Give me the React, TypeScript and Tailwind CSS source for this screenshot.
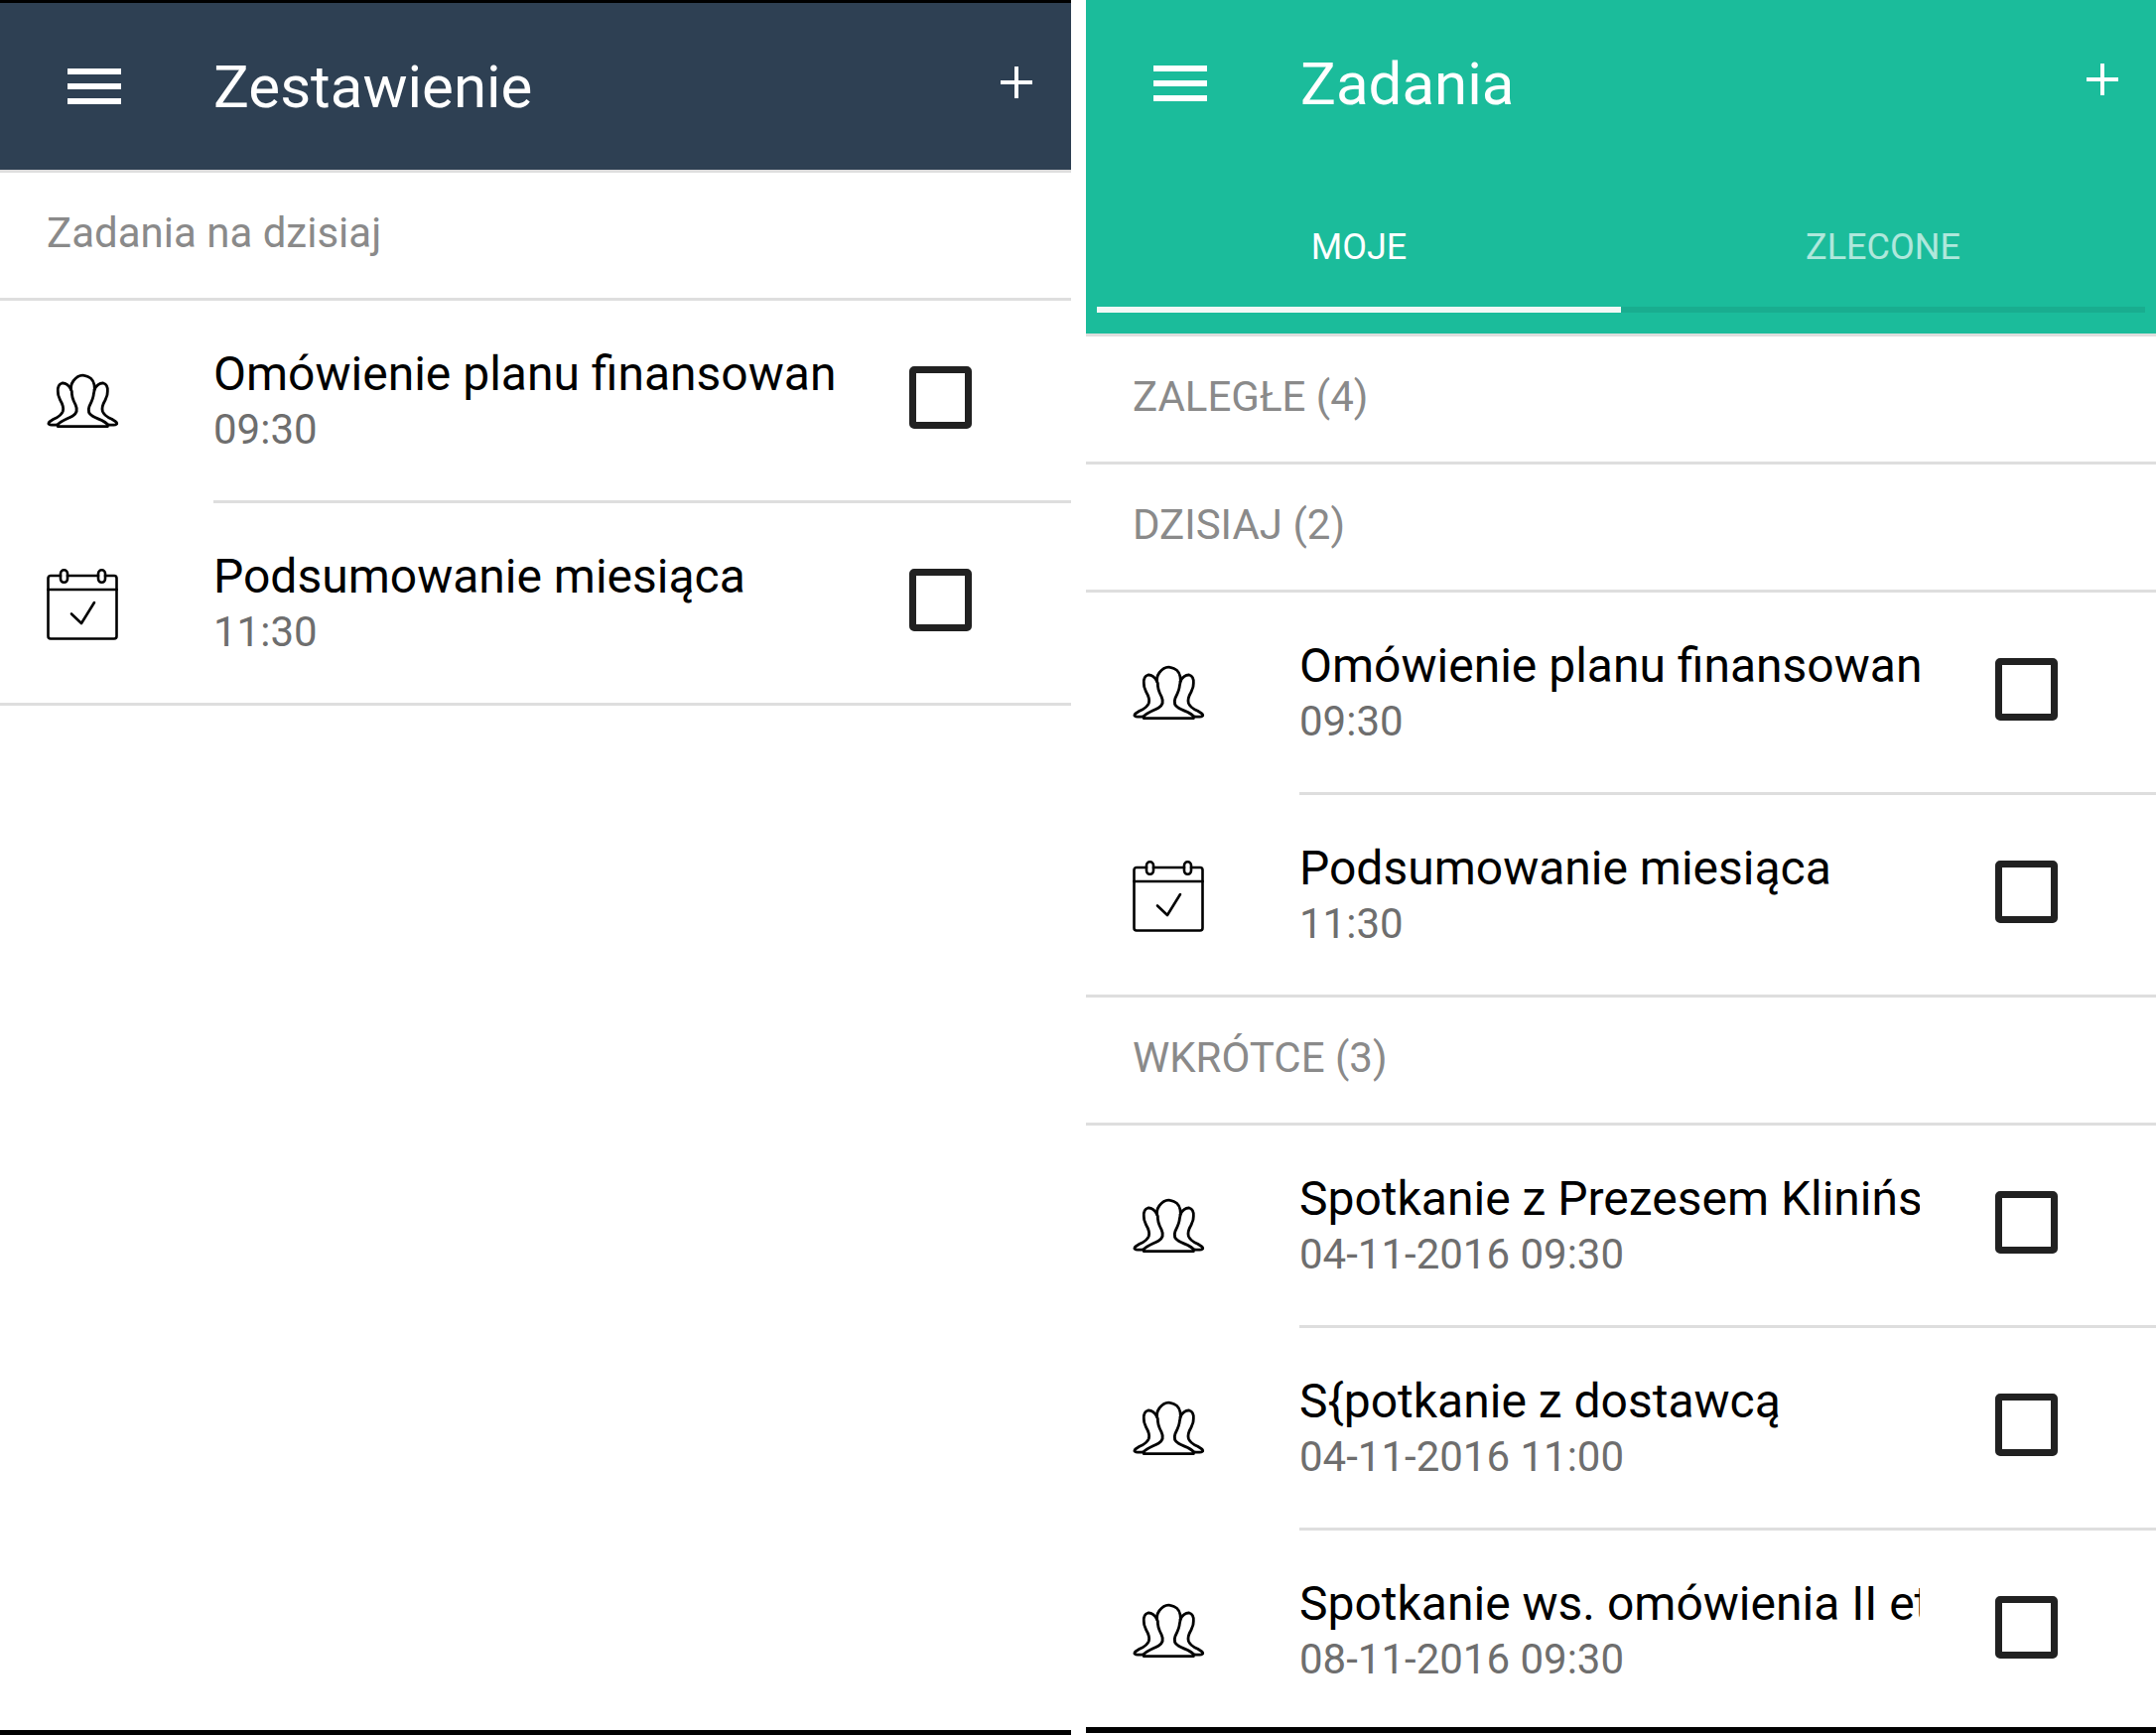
const font = "font-['Roboto',sans-serif]";

function Hamburger() {
  return (
    <div className="flex w-[54px] flex-col gap-[9px]">
      <div className="h-[6px] bg-white" />
      <div className="h-[6px] bg-white" />
      <div className="h-[6px] bg-white" />
    </div>
  );
}

function Plus() {
  return (
    <svg width="32" height="32" viewBox="0 0 32 32" className="mb-[8px] shrink-0">
      <path d="M14 0h4v14h14v4H18v14h-4V18H0v-4h14z" fill="#fff" />
    </svg>
  );
}

function PeopleIcon() {
  return (
    <svg width="72" height="54" viewBox="52 48 214 162" fill="none" stroke="#000" strokeWidth="8.500" strokeLinejoin="round" strokeLinecap="round" className="overflow-visible">
      <path d="M85 206L85 200C95 188 115 183 130 174C143 166 145 155 138 140C130 125 126 115 127 100C122 90 125 78 132 68C142 55 155 50 165 52C180 54 192 65 195 80C198 92 196 100 193 108C192 122 186 132 180 145C175 158 178 168 190 175C205 184 226 188 235 200L235 206Z" />
      <path d="M125 95C120 82 108 74 98 75C88 78 84 88 85 100C84 112 88 118 93 128C100 140 103 150 100 160C96 172 85 178 72 184C62 190 55 192 57 198C60 203 72 202 85 201" />
      <path d="M195 95C200 82 212 74 222 75C232 78 236 88 235 100C236 112 232 118 227 128C220 140 217 150 220 160C224 172 235 178 248 184C258 190 265 192 263 198C260 203 248 202 235 201" />
    </svg>
  );
}

function CalendarIcon() {
  return (
    <svg width="72" height="72" viewBox="0 0 72 72" fill="none" stroke="#000" strokeWidth="2.600" strokeLinejoin="round" strokeLinecap="round" className="mt-[3px]">
      <path d="M14 7H4a2.500 2.500 0 0 0-2.500 2.500V68a2.500 2.500 0 0 0 2.500 2.500H68a2.500 2.500 0 0 0 2.500-2.500V9.500A2.500 2.500 0 0 0 68 7H59" />
      <path d="M21 7h31" />
      <path d="M1.500 21h69" />
      <rect x="14" y="1.300" width="7" height="12.500" rx="3.500" />
      <rect x="52" y="1.300" width="7" height="12.500" rx="3.500" />
      <path d="M25 45.500l10 9.500 13-21" />
    </svg>
  );
}

function Section({ label }: { label: string }) {
  return (
    <div className="flex h-[129px] shrink-0 items-center border-b-[3px] border-[#dedede] pb-[5px] pl-[47px] text-[42px] leading-none text-[#8a8a8a]">
      {label}
    </div>
  );
}

function Row({ icon, title, time, last, className }: { icon: "people" | "calendar"; title: string; time: string; last?: boolean; className?: string }) {
  return (
    <div className={`flex h-[204px] shrink-0 flex-col ${className ?? ""}`}>
      <div className="flex flex-1 items-center">
        <div className="flex w-[215px] shrink-0 pl-[47px]">{icon === "people" ? <PeopleIcon /> : <CalendarIcon />}</div>
        <div className="w-[625px] shrink-0 overflow-hidden whitespace-nowrap">
          <div className="text-[48px] leading-[56px] text-black">{title}</div>
          <div className="mt-[3px] text-[42px] leading-[50px] text-[#6e6e6e]">{time}</div>
        </div>
        <div className="mb-[6px] ml-[76px] size-[63px] shrink-0 rounded-[5px] border-[7px] border-[#212121]" />
      </div>
      {last === undefined ? <div className="h-[3px]" /> : <div className={last ? "h-[3px] bg-[#dedede]" : "ml-[215px] h-[3px] bg-[#dedede]"} />}
    </div>
  );
}

export default function App() {
  return (
    <div className={`flex h-[1748px] w-[2172px] overflow-hidden bg-white ${font}`}>
      {/* left phone */}
      <div className="flex w-[1079px] shrink-0 flex-col">
        <div className="h-[3px] shrink-0 bg-black" />
        <div className="flex h-[168px] shrink-0 items-center bg-[#2e4053] pr-[39px] pl-[68px] text-white">
          <Hamburger />
          <div className="ml-[93px] flex-1 pt-[2px] text-[60px] leading-none">Zestawienie</div>
          <Plus />
        </div>
        <div className="h-[3px] shrink-0 bg-[#dedede]" />
        <Section label="Zadania na dzisiaj" />
        <Row icon="people" title="Omówienie planu finansowania" time="09:30" last={false} />
        <Row icon="calendar" title="Podsumowanie miesiąca" time="11:30" last={true} />
        <div className="flex-1" />
        <div className="h-[5px] shrink-0 bg-black" />
      </div>

      <div className="w-[15px] shrink-0" />

      {/* right phone */}
      <div className="flex flex-1 flex-col">
        <div className="flex h-[336px] shrink-0 flex-col bg-[#1bbc9b] text-white">
          <div className="flex h-[168px] shrink-0 items-center pr-[38px] pl-[68px]">
            <Hamburger />
            <div className="ml-[94px] flex-1 pt-[1px] text-[60px] leading-none">Zadania</div>
            <Plus />
          </div>
          <div className="flex h-[147px] shrink-0 px-[11px]">
            <div className="flex flex-1 flex-col">
              <div className="flex flex-1 items-center justify-center pt-[21px] text-[36px] leading-none">MOJE</div>
              <div className="h-[6px] bg-[#f3f8f6]" />
            </div>
            <div className="flex flex-1 flex-col">
              <div className="flex flex-1 items-center justify-center pt-[21px] text-[36px] leading-none text-white/65">ZLECONE</div>
              <div className="h-[6px] bg-[#19ad8f]" />
            </div>
          </div>
        </div>
        <div className="h-[3px] shrink-0 bg-[#dedede]" />
        <Section label="ZALEGŁE (4)" />
        <Section label="DZISIAJ (2)" />
        <Row icon="people" title="Omówienie planu finansowania" time="09:30" last={false} />
        <Row icon="calendar" title="Podsumowanie miesiąca" time="11:30" last={true} />
        <Section label="WKRÓTCE (3)" />
        <Row icon="people" title="Spotkanie z Prezesem Klinińskim" time="04-11-2016 09:30" last={false} />
        <Row icon="people" title="S{potkanie z dostawcą" time="04-11-2016 11:00" last={false} />
        <Row icon="people" title="Spotkanie ws. omówienia II etapu" time="08-11-2016 09:30" className="-mb-[6px]" />
        <div className="h-[6px] shrink-0 bg-black" />
        <div className="h-[2px] shrink-0" />
      </div>
    </div>
  );
}
